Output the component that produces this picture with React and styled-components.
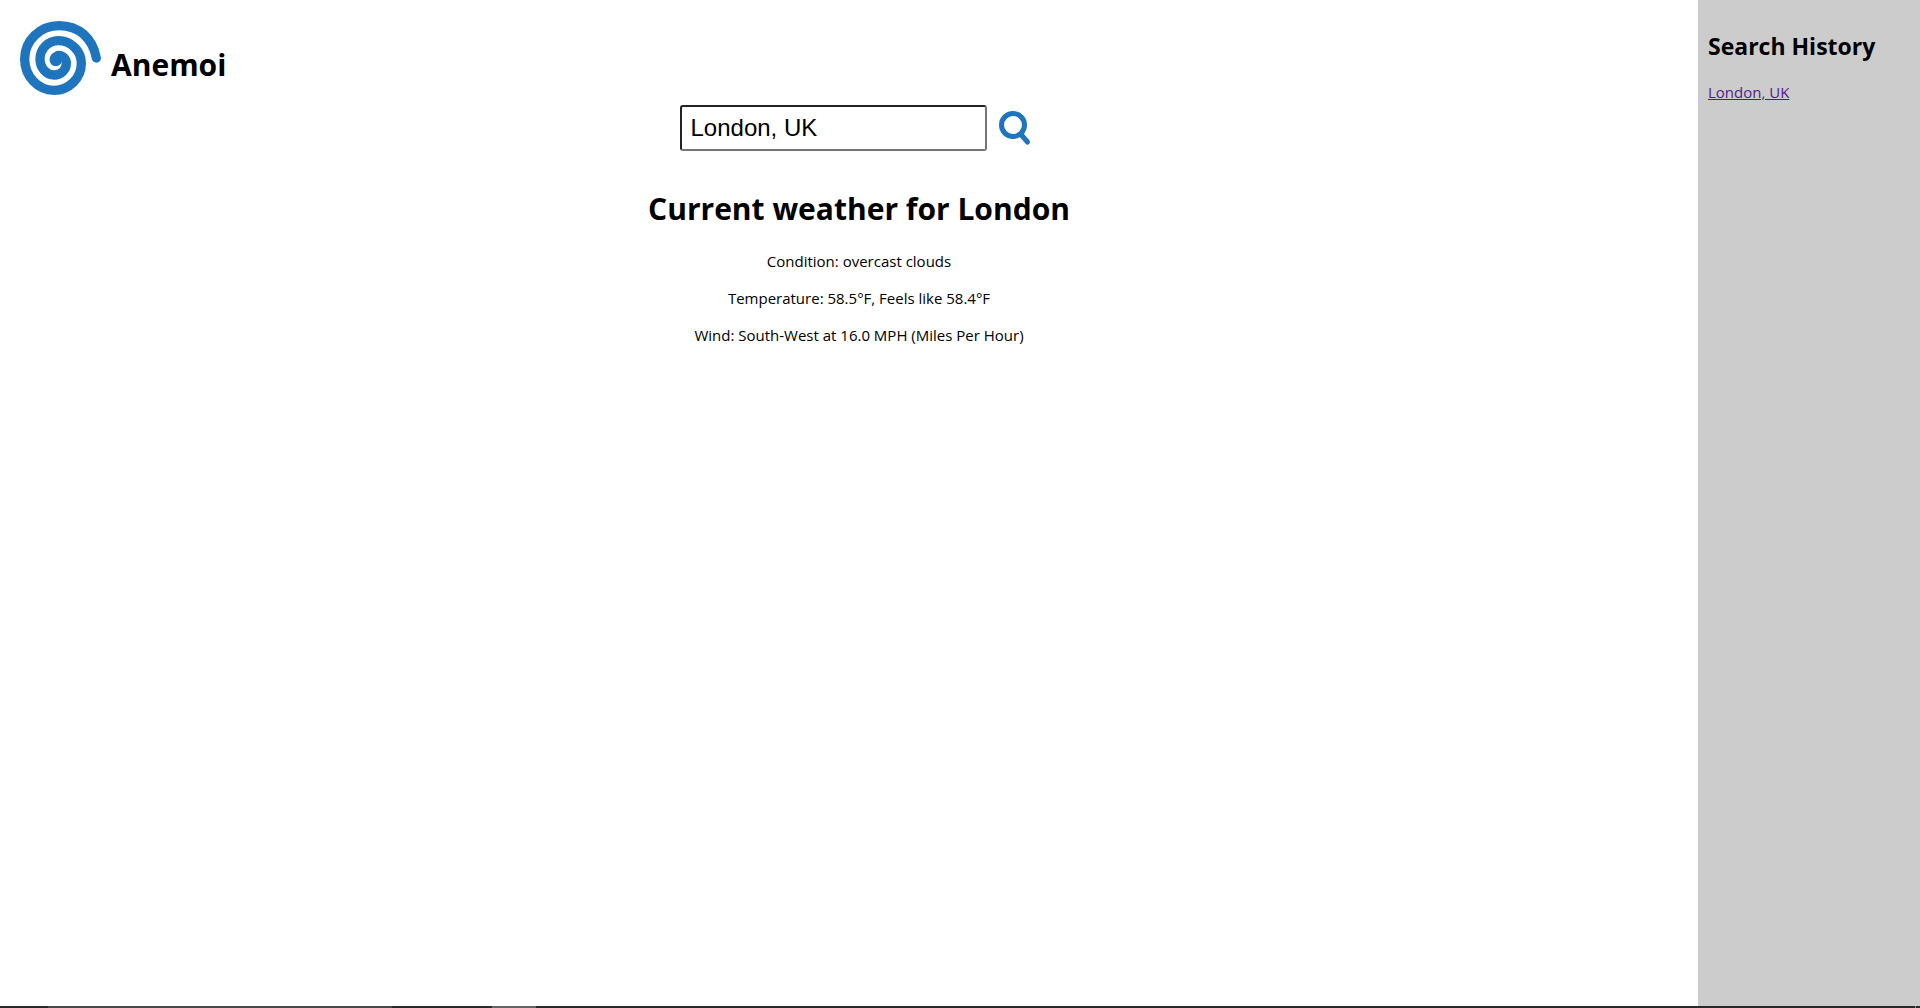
import React, { useState } from "react";
import styled, { createGlobalStyle } from "styled-components";

const GlobalStyle = createGlobalStyle`
  *, *::before, *::after { box-sizing: border-box; }
  body {
    margin: 0;
    background: #fff;
    color: #000;
    font-family: "Segoe UI", "Open Sans", "Noto Sans", sans-serif;
    font-size: 15px;
    line-height: 21px;
  }
`;

const Page = styled.div`
  display: flex;
  flex-direction: column;
  min-height: 100vh;
`;

const Columns = styled.div`
  display: flex;
  flex: 1;
`;

const Main = styled.main`
  flex: 1;
  padding: 20px 0 20px 20px;
`;

const Brand = styled.header`
  display: flex;
  align-items: center;
  gap: 9px;
`;

const Logo = styled.svg`
  width: 82px;
  height: 76px;
`;

const Title = styled.h1`
  margin: 0;
  padding-top: 12px;
  font-size: 30px;
  line-height: 43px;
`;

const SearchForm = styled.form`
  display: flex;
  justify-content: center;
  align-items: center;
  gap: 8px;
  margin-top: 9px;
`;

const SearchInput = styled.input`
  width: 307px;
  height: 46px;
  padding: 0 9px;
  border: 2px solid;
  border-color: #222 #767676 #767676 #222;
  border-radius: 3px;
  background: #fff;
  color: #000;
  font-family: Arial, "Liberation Sans", sans-serif;
  font-size: 24px;
`;

const SearchButton = styled.button`
  display: flex;
  padding: 2px;
  border: 0;
  background: none;
  cursor: pointer;
`;

const SearchIcon = styled.svg`
  width: 40px;
  height: 38px;
`;

const Weather = styled.section`
  padding-top: 36px;
  text-align: center;
`;

const WeatherTitle = styled.h2`
  margin: 0 0 21px;
  font-size: 30px;
  line-height: 43px;
`;

const Reading = styled.p`
  margin: 0 0 16px;
`;

const Sidebar = styled.aside`
  width: 222px;
  padding: 30px 10px;
  background: #ccc;
`;

const SidebarTitle = styled.h2`
  margin: 0 0 20px;
  font-size: 23px;
  line-height: 32px;
`;

const HistoryList = styled.ul`
  margin: 0;
  padding: 0;
  list-style: none;
`;

const HistoryLink = styled.a`
  color: #551a8b;
`;

const Taskbar = styled.footer`
  display: flex;
  height: 2px;
  background: #2b2a2b;
`;

const TaskbarPart = styled.span`
  width: ${(p) => p.$width}px;
  margin-left: ${(p) => p.$gap}px;
  background: ${(p) => p.$color};
`;

const readings = [
  "Condition: overcast clouds",
  "Temperature: 58.5°F, Feels like 58.4°F",
  "Wind: South-West at 16.0 MPH (Miles Per Hour)",
];

export default function App() {
  const [query, setQuery] = useState("London, UK");
  return (
    <Page>
      <GlobalStyle />
      <Columns>
        <Main>
          <Brand>
            <Logo viewBox="30 30 246 228" aria-hidden="true">
              <path
                d="M259 144 C248 86 208 47 147 47 A103 100 0 0 0 44 147 A88 94 0 0 0 132 241 A82 81 0 0 0 214 160 A69 68 0 0 0 145 92 A55 55 0 0 0 90 147 A43 48 0 0 0 133 195 A36 35 0 0 0 169 160 A23 24 0 0 0 146 136"
                fill="none"
                stroke="#1e75bd"
                strokeWidth="28"
                strokeLinecap="round"
              />
              <path
                d="M146 123 C130 124 119 136 119 149 C119 160 126 168 136 168 C148 168 156 161 155 152 L166 140 Z"
                fill="#1e75bd"
              />
            </Logo>
            <Title>Anemoi</Title>
          </Brand>
          <SearchForm onSubmit={(e) => e.preventDefault()}>
            <SearchInput
              aria-label="City"
              value={query}
              onChange={(e) => setQuery(e.target.value)}
            />
            <SearchButton type="submit" aria-label="Search">
              <SearchIcon viewBox="0 0 40 38" aria-hidden="true">
                <g fill="none" stroke="#1e75bd" strokeWidth="5" strokeLinecap="round">
                  <circle cx="16" cy="16" r="11.5" />
                  <path d="M24 25.5 L30.5 33" />
                </g>
              </SearchIcon>
            </SearchButton>
          </SearchForm>
          <Weather>
            <WeatherTitle>Current weather for London</WeatherTitle>
            {readings.map((text) => (
              <Reading key={text}>{text}</Reading>
            ))}
          </Weather>
        </Main>
        <Sidebar>
          <SidebarTitle>Search History</SidebarTitle>
          <HistoryList>
            <li>
              <HistoryLink href="#london">London, UK</HistoryLink>
            </li>
          </HistoryList>
        </Sidebar>
      </Columns>
      <Taskbar>
        <TaskbarPart $gap={48} $width={344} $color="#4a494a" />
        <TaskbarPart $gap={100} $width={44} $color="#656465" />
        <TaskbarPart $gap={1379} $width={1} $color="#8a898a" />
      </Taskbar>
    </Page>
  );
}
